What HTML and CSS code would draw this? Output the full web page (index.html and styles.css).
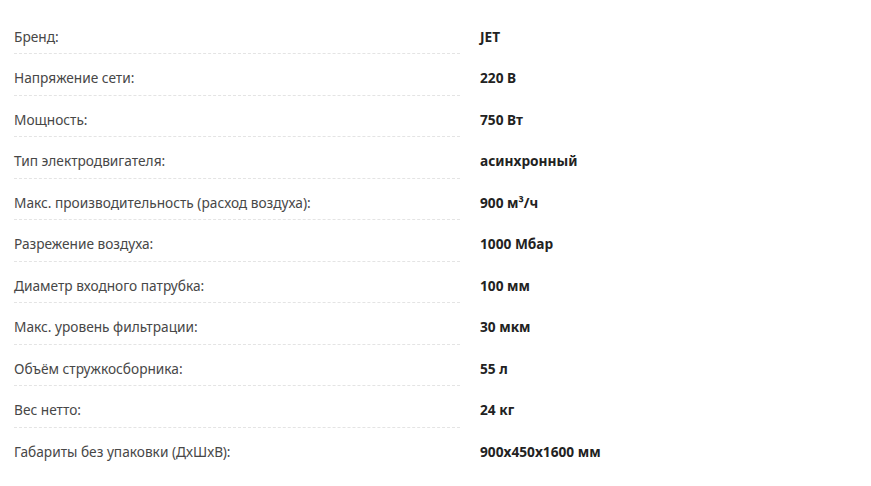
FILE: index.html
```html
<!DOCTYPE html>
<html lang="ru">
<head>
    <meta charset="UTF-8">
    <meta name="viewport" content="width=device-width, initial-scale=1.0">
    <title>Характеристики</title>
    <link rel="stylesheet" href="styles.css">
</head>
<body>
    <div class="specs">
        <div class="spec-row">
            <div class="spec-name">Бренд:</div>
            <div class="spec-value">JET</div>
        </div>
        <div class="spec-row">
            <div class="spec-name">Напряжение сети:</div>
            <div class="spec-value">220 В</div>
        </div>
        <div class="spec-row">
            <div class="spec-name">Мощность:</div>
            <div class="spec-value">750 Вт</div>
        </div>
        <div class="spec-row">
            <div class="spec-name">Тип электродвигателя:</div>
            <div class="spec-value">асинхронный</div>
        </div>
        <div class="spec-row">
            <div class="spec-name">Макс. производительность (расход воздуха):</div>
            <div class="spec-value">900 м³/ч</div>
        </div>
        <div class="spec-row">
            <div class="spec-name">Разрежение воздуха:</div>
            <div class="spec-value">1000 Мбар</div>
        </div>
        <div class="spec-row">
            <div class="spec-name">Диаметр входного патрубка:</div>
            <div class="spec-value">100 мм</div>
        </div>
        <div class="spec-row">
            <div class="spec-name">Макс. уровень фильтрации:</div>
            <div class="spec-value">30 мкм</div>
        </div>
        <div class="spec-row">
            <div class="spec-name">Объём стружкосборника:</div>
            <div class="spec-value">55 л</div>
        </div>
        <div class="spec-row">
            <div class="spec-name">Вес нетто:</div>
            <div class="spec-value">24 кг</div>
        </div>
        <div class="spec-row">
            <div class="spec-name">Габариты без упаковки (ДхШхВ):</div>
            <div class="spec-value">900x450x1600 мм</div>
        </div>
    </div>
</body>
</html>
```

FILE: styles.css
```css
* {
    margin: 0;
    padding: 0;
    box-sizing: border-box;
}

body {
    background: #fff;
    font-family: 'Noto Sans', 'Open Sans', sans-serif;
    font-size: 13.7px;
}

.specs {
    padding: 12.5px 0 0 14px;
}

.spec-row {
    display: grid;
    grid-template-columns: 446px 1fr;
    gap: 20px;
    height: 41.5px;
}

.spec-name {
    color: #474747;
    line-height: 16px;
    padding-top: 16px;
    border-bottom: 1px dashed #e4e4e4;
}

.spec-row:last-child .spec-name {
    border-bottom: none;
}

.spec-value {
    color: #222;
    font-weight: 700;
    line-height: 16px;
    padding-top: 16px;
}
```
